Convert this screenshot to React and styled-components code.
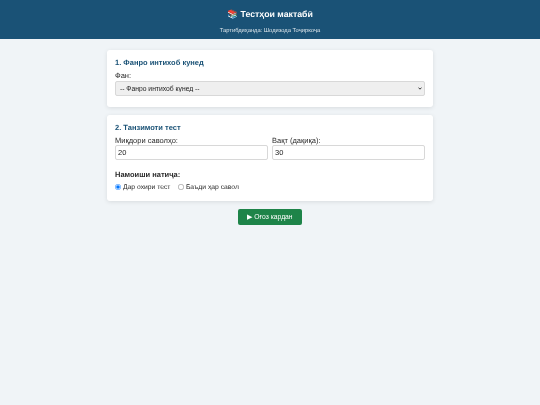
import React from "react";
import styled, { createGlobalStyle } from "styled-components";

const Global = createGlobalStyle`
  html, body { margin: 0; padding: 0; background: #f0f4f7; }
  body {
    font-family: "Liberation Sans", Arial, sans-serif;
    color: #2b2b2b;
    text-rendering: geometricPrecision;
  }
  * { box-sizing: border-box; }
`;

const Page = styled.div`
  filter: blur(0.25px);
`;
const Header = styled.header`
  height: 39px;
  background: #1a5276;
  color: #fff;
  text-align: center;
  padding-top: 8px;
`;
const Title = styled.h1`
  margin: 0;
  font-size: 8.75px;
  line-height: 13px;
  font-weight: 700;
`;
const Subtitle = styled.p`
  margin: 7px 0 0;
  font-size: 5.75px;
  line-height: 7px;
  opacity: 0.85;
`;
const Main = styled.main`
  width: 326px;
  margin: 11px auto 0;
  display: flex;
  flex-direction: column;
  gap: 8px;
`;
const Card = styled.section`
  background: #fff;
  border-radius: 3px;
  padding: 8px;
  box-shadow: 0 1px 4px rgba(0, 0, 0, 0.1);
  height: ${p => p.$h}px;
`;
const CardTitle = styled.h2`
  margin: 0 0 5px;
  font-size: 7.5px;
  line-height: 9px;
  font-weight: 700;
  color: #1a5276;
`;
const Label = styled.label`
  display: block;
  font-size: 7.5px;
  line-height: 8px;
  margin-bottom: 0;
  color: #2b2b2b;
`;
const arrow =
  "data:image/svg+xml;utf8," +
  encodeURIComponent(
    '<svg xmlns="http://www.w3.org/2000/svg" viewBox="0 0 8 6"><path d="M1 1.2 L4 4.4 L7 1.2" fill="none" stroke="#222" stroke-width="1.8"/></svg>'
  );
const Select = styled.select`
  display: block;
  appearance: none;
  width: 100%;
  height: 15px;
  margin-top: 1px;
  font-family: inherit;
  font-size: 6.75px;
  padding: 0 0 0 4px;
  border: 1px solid #d8d8d8;
  border-radius: 2px;
  background: #efefef url('${arrow}') no-repeat right 2.5px center / 4px 3px;
  color: #222;
`;
const Row = styled.div`
  display: flex;
  gap: 4px;
`;
const Field = styled.div`
  flex: 1;
`;
const Input = styled.input`
  display: block;
  width: 100%;
  height: 15px;
  font-family: inherit;
  font-size: 7.5px;
  padding: 0 2px;
  border: 1px solid #d8d8d8;
  border-radius: 2px;
  color: #222;
`;
const ResultTitle = styled.div`
  margin-top: 10px;
  font-size: 7.5px;
  line-height: 9px;
  font-weight: 700;
  color: #2b2b2b;
`;
const Radios = styled.div`
  display: flex;
  gap: 7.5px;
  margin-top: 4px;
`;
const RadioLabel = styled.label`
  display: flex;
  align-items: center;
  gap: 2px;
  font-size: 6.75px;
  line-height: 10px;
  color: #2b2b2b;
`;
const Radio = styled.input`
  zoom: 0.5;
  width: 12px;
  height: 12px;
  margin: 0 0 5px;
`;
const Actions = styled.div`
  display: flex;
  justify-content: center;
`;
const Start = styled.button`
  width: 64px;
  height: 16px;
  background: #1e8449;
  color: #fff;
  border: 0;
  border-radius: 2px;
  font-family: inherit;
  font-size: 6.75px;
  padding: 0;
`;

export default function App() {
  return (
    <>
      <Global />
      <Page>
        <Header>
          <Title>📚 Тестҳои мактабӣ</Title>
          <Subtitle>Тартибдиҳанда: Шодизода Тоҷиркоҷа</Subtitle>
        </Header>
        <Main>
          <Card $h={57}>
            <CardTitle>1. Фанро интихоб кунед</CardTitle>
            <Label>Фан:</Label>
            <Select defaultValue="">
              <option value="">-- Фанро интихоб кунед --</option>
            </Select>
          </Card>
          <Card $h={86}>
            <CardTitle>2. Танзимоти тест</CardTitle>
            <Row>
              <Field>
                <Label>Миқдори саволҳо:</Label>
                <Input defaultValue="20" />
              </Field>
              <Field>
                <Label>Вақт (дақиқа):</Label>
                <Input defaultValue="30" />
              </Field>
            </Row>
            <ResultTitle>Намоиши натиҷа:</ResultTitle>
            <Radios>
              <RadioLabel><Radio type="radio" name="r" defaultChecked />Дар охири тест</RadioLabel>
              <RadioLabel><Radio type="radio" name="r" />Баъди ҳар савол</RadioLabel>
            </Radios>
          </Card>
          <Actions>
            <Start>▶ Оғоз кардан</Start>
          </Actions>
        </Main>
      </Page>
    </>
  );
}
